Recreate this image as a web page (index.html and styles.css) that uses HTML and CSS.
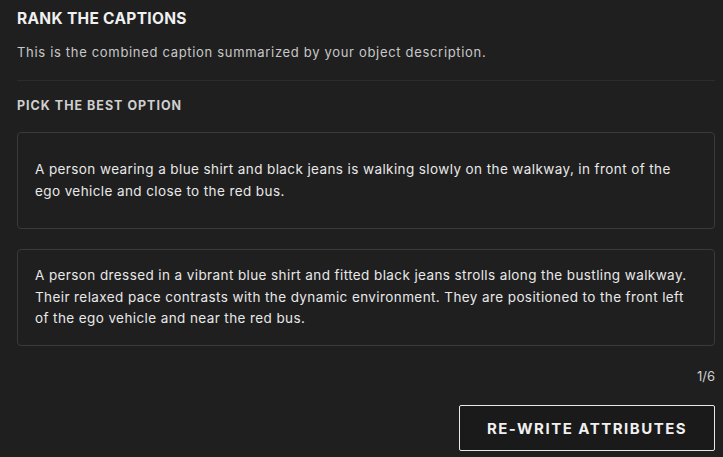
FILE: index.html
```html
<!DOCTYPE html>
<html>
<head>
<meta charset="utf-8">
<link rel="stylesheet" href="styles.css">
</head>
<body>
<main class="panel">
  <h1 class="title">RANK THE CAPTIONS</h1>
  <p class="subtitle">This is the combined caption summarized by your object description.</p>
  <hr class="divider">
  <h2 class="section">PICK THE BEST OPTION</h2>
  <div class="options">
    <div class="option"><p class="option-text">A person wearing a blue shirt and black jeans is walking slowly on the walkway, in front of the ego vehicle and close to the red bus.</p></div>
    <div class="option"><p class="option-text">A person dressed in a vibrant blue shirt and fitted black jeans strolls along the bustling walkway. Their relaxed pace contrasts with the dynamic environment. They are positioned to the front left of the ego vehicle and near the red bus.</p></div>
  </div>
  <div class="pager">1/6</div>
  <div class="actions">
    <button class="btn">RE-WRITE ATTRIBUTES</button>
  </div>
</main>
</body>
</html>
```
FILE: styles.css
```css
* { box-sizing: border-box; }
html, body {
  margin: 0;
  background: #1f1f1f;
  color: #e6e6e6;
  font-family: "Inter", "Noto Sans", sans-serif;
}
.panel {
  padding: 9px 8px 0 17px;
  display: flex;
  flex-direction: column;
}
.title {
  margin: 0;
  font-size: 15.5px;
  font-weight: 700;
  letter-spacing: 0.3px;
  line-height: 20px;
  color: #f0f0f0;
}
.subtitle {
  margin: 14px 0 0;
  font-size: 13px;
  line-height: 18px;
  color: #c8c8c8;
  letter-spacing: 0.68px;
}
.divider {
  margin: 19px 0 0;
  border: 0;
  border-top: 1px solid #2c2c2c;
  height: 0;
}
.section {
  margin: 17px 0 0;
  font-size: 12.5px;
  font-weight: 700;
  letter-spacing: 1px;
  line-height: 16px;
  color: #cfcfcf;
}
.options {
  margin-top: 18px;
  display: flex;
  flex-direction: column;
  gap: 20px;
}
.option {
  height: 97px;
  display: flex;
  align-items: center;
  padding: 0 17px;
  border: 1px solid #3a3a3a;
  border-radius: 4px;
}
.option-text {
  flex: 1;
  margin: 0;
  font-size: 13.5px;
  line-height: 21.5px;
  letter-spacing: 0.4px;
  color: #e8e8e8;
}
.pager {
  margin-top: 21px;
  text-align: right;
  font-size: 13px;
  line-height: 18px;
  color: #cfcfcf;
}
.actions {
  margin-top: 20px;
  display: flex;
  justify-content: flex-end;
}
.btn {
  width: 256px;
  height: 46px;
  background: #1a1a1a;
  border: 1px solid #e8e8e8;
  border-radius: 2px;
  color: #f0f0f0;
  font-family: inherit;
  font-size: 15px;
  font-weight: 700;
  letter-spacing: 1.5px;
}
```
